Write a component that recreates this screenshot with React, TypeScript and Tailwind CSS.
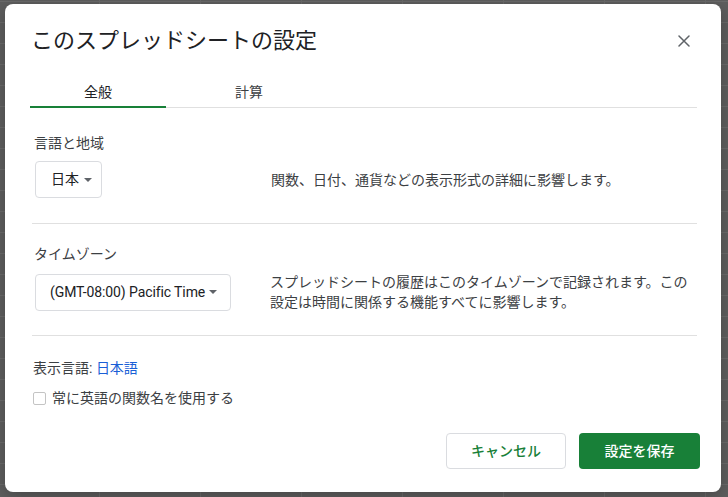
import React from "react";

function Caret() {
  return (
    <span className="inline-block shrink-0 w-0 h-0 border-l-[4px] border-r-[4px] border-t-[4px] border-l-transparent border-r-transparent border-t-[#5f6368]" />
  );
}

export default function App() {
  const font = "font-['Roboto','Noto_Sans_CJK_JP',sans-serif]";
  return (
    <div
      className={`w-[728px] h-[497px] bg-[#5e5e5e] [background-image:linear-gradient(to_right,#6a6a6a_1px,transparent_1px),linear-gradient(to_bottom,#6a6a6a_1px,transparent_1px)] [background-size:101px_21px] [background-position:99px_1px] pl-[5px] pt-[4px] ${font}`}
    >
      <div className="w-[716px] h-[488px] bg-white rounded-[8px] shadow-[0_4px_16px_rgba(0,0,0,0.25)] pt-[23px] pl-[25px] pr-[23px] flex flex-col">
        {/* header */}
        <div className="flex items-center justify-between h-[28px]">
          <div className="pl-[1px] text-[22px] leading-[28px] text-[#202124]">このスプレッドシートの設定</div>
          <button className="w-[24px] h-[24px] flex items-center justify-center mr-[2px]">
            <svg width="12" height="12" viewBox="0 0 12 12">
              <path d="M1 1 L11 11 M11 1 L1 11" stroke="#5f6368" strokeWidth="1.5" strokeLinecap="round" />
            </svg>
          </button>
        </div>
        {/* tabs */}
        <div className="flex border-b border-[#e0e0e0] mr-[1px]">
          <div className="w-[136px] pt-[27px] pb-[4px] text-center text-[14px] leading-[20px] text-[#202124] border-b-2 border-[#188038] -mb-px">
            全般
          </div>
          <div className="w-[136px] ml-[15px] pt-[27px] pb-[4px] text-center text-[14px] leading-[20px] text-[#3c4043]">
            計算
          </div>
        </div>
        {/* section 1 */}
        <div className="pl-[2px] mr-[1px] flex flex-col text-[#3c4043]">
          <div className="mt-[25px] pl-[2px] text-[14px] leading-[20px]">言語と地域</div>
          <div className="mt-[8px] flex items-center">
            <div className="w-[239px] shrink-0 pl-[3px]">
              <div className="w-[67px] h-[37px] border border-[#dadce0] rounded-[4px] flex items-center justify-between pl-[15px] pr-[9px] text-[14px] text-[#202124]">
                <span>日本</span>
                <Caret />
              </div>
            </div>
            <div className="text-[14px] leading-[20px]">
              関数、日付、通貨などの表示形式の詳細に影響します。
            </div>
          </div>
          <div className="mt-[25px] h-px bg-[#e0e0e0]" />
          {/* section 2 */}
          <div className="mt-[20px] pl-[2px] text-[14px] leading-[20px]">タイムゾーン</div>
          <div className="mt-[8px] flex items-center">
            <div className="w-[238px] shrink-0 pl-[3px]">
              <div className="w-[196px] h-[37px] border border-[#dadce0] rounded-[4px] flex items-center justify-between pl-[14px] pr-[13px] text-[14px] text-[#202124]">
                <span className="tracking-[-0.1px]">(GMT-08:00) Pacific Time</span>
                <Caret />
              </div>
            </div>
            <div className="text-[14px] leading-[20px] w-[430px]">
              スプレッドシートの履歴はこのタイムゾーンで記録されます。この設定は時間に関係する機能すべてに影響します。
            </div>
          </div>
          <div className="mt-[23px] h-px bg-[#e0e0e0]" />
          {/* section 3 */}
          <div className="mt-[22px] pl-[1px] text-[14px] leading-[20px]">
            表示言語: <span className="text-[#1a5fd6]">日本語</span>
          </div>
          <div className="mt-[10px] flex items-center gap-[6px] pl-[1px]">
            <span className="w-[13px] h-[13px] border border-[#c4c4c4] rounded-[2px] bg-white" />
            <span className="text-[14px] leading-[20px]">常に英語の関数名を使用する</span>
          </div>
        </div>
        {/* buttons */}
        <div className="mt-auto mb-[23px] -mr-[2px] flex justify-end gap-[13px]">
          <button className="w-[120px] h-[36px] border border-[#dadce0] rounded-[4px] bg-white text-[14px] text-[#188038] font-medium">
            キャンセル
          </button>
          <button className="w-[121px] h-[36px] rounded-[4px] bg-[#188038] text-[14px] text-white font-medium">
            設定を保存
          </button>
        </div>
      </div>
    </div>
  );
}
